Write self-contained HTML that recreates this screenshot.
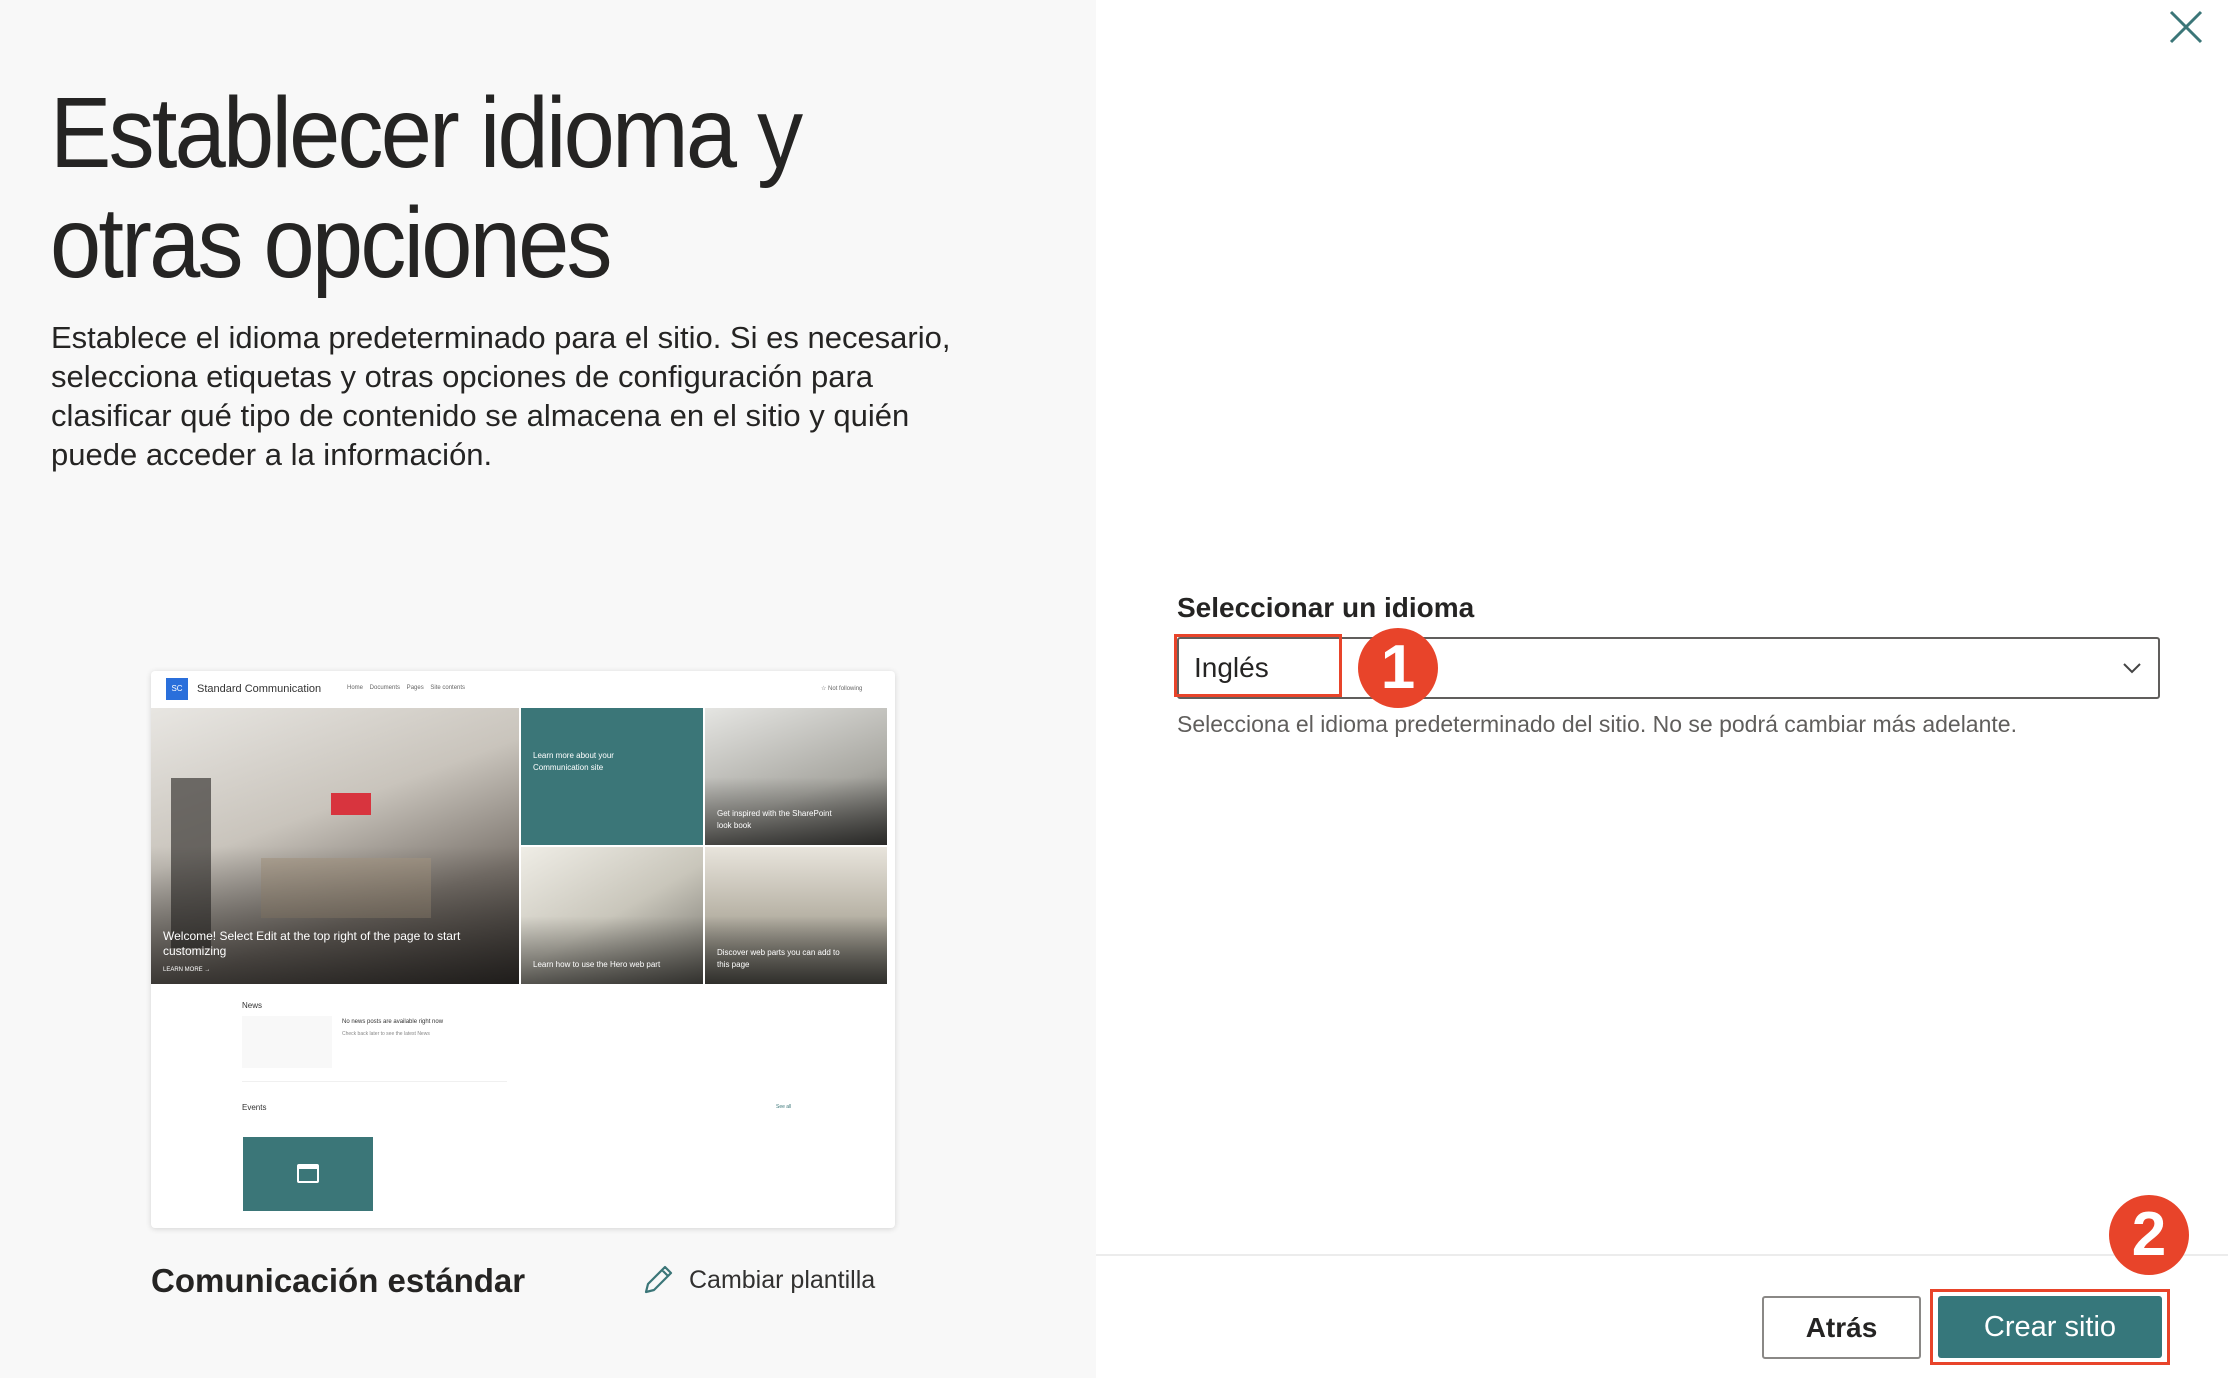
<!DOCTYPE html>
<html><head><meta charset="utf-8"><style>
*{box-sizing:border-box;margin:0;padding:0}
body{width:2228px;height:1378px;position:relative;overflow:hidden;background:#fff;font-family:"Liberation Sans",sans-serif;color:#323130}
.left{position:absolute;left:0;top:0;width:1096px;height:1378px;background:#f8f8f8}
h1{position:absolute;left:50px;top:78px;font-size:100px;font-weight:400;line-height:110px;letter-spacing:-3px;color:#252423;transform:scaleX(0.92);transform-origin:0 0;white-space:nowrap}
.desc{position:absolute;left:51px;top:318px;width:930px;font-size:31px;line-height:39px;color:#252423}
.card{position:absolute;left:151px;top:671px;width:744px;height:557px;background:#fff;box-shadow:0 1px 6px rgba(0,0,0,.15);border-radius:4px;overflow:hidden}
.hdr{height:37px;position:relative;font-size:11px;color:#444}
.abs{position:absolute}
.t{color:#fff;font-size:10px;line-height:12px;position:absolute}
.bl{position:absolute;left:0;bottom:0;width:100%;height:50%;background:linear-gradient(rgba(0,0,0,0),rgba(0,0,0,.55))}
.lab{position:absolute;left:1177px;top:592px;font-size:28px;font-weight:700;color:#252423}
.dd{position:absolute;left:1177px;top:637px;width:983px;height:62px;border:2px solid #605e5c;border-radius:3px}
.red1{position:absolute;left:1174px;top:634px;width:168px;height:63px;border:3px solid #e8442a}
.badge{position:absolute;width:80px;height:80px;border-radius:50%;background:#e8442a;color:#fff;font-weight:700;font-size:62px;text-align:center;line-height:80px}
.help{position:absolute;left:1177px;top:711px;font-size:23px;color:#605e5c}
.btn{position:absolute;font-size:28px;font-weight:700;text-align:center}
</style></head><body>
<div class="left">
<h1>Establecer idioma y<br>otras opciones</h1>
<div class="desc">Establece el idioma predeterminado para el sitio. Si es necesario, selecciona etiquetas y otras opciones de configuración para clasificar qué tipo de contenido se almacena en el sitio y quién puede acceder a la información.</div>
<div class="card">
 <div class="hdr">
  <div class="abs" style="left:15px;top:7px;width:22px;height:22px;background:#2a6fdb;color:#fff;font-size:8px;text-align:center;line-height:22px">SC</div>
  <div class="abs" style="left:46px;top:12px;font-size:11px;color:#333">Standard Communication</div>
  <div class="abs" style="left:196px;top:14px;font-size:6px;color:#666">Home &nbsp;&nbsp; Documents &nbsp;&nbsp; Pages &nbsp;&nbsp; Site contents</div>
  <div class="abs" style="left:670px;top:14px;font-size:6px;color:#666">☆ Not following</div>
 </div>
 <div class="abs" style="left:0;top:37px;width:368px;height:276px;background:linear-gradient(160deg,#e8e6e2 0%,#c9c4bc 40%,#7d766f 70%,#45403c 100%)">
  <div class="abs" style="left:180px;top:85px;width:40px;height:22px;background:#d8343e"></div>
  <div class="abs" style="left:20px;top:70px;width:40px;height:170px;background:#3d3a38;opacity:.7"></div>
  <div class="abs" style="left:110px;top:150px;width:170px;height:60px;background:#a89a86;opacity:.6"></div>
  <div class="bl"></div>
  <div class="t" style="left:12px;top:221px;font-size:12px;line-height:15px;width:340px">Welcome! Select Edit at the top right of the page to start customizing</div>
  <div class="t" style="left:12px;top:256px;font-size:6px">LEARN MORE →</div>
 </div>
 <div class="abs" style="left:370px;top:37px;width:182px;height:137px;background:#3b7678"><div class="t" style="left:12px;top:42px;font-size:8px">Learn more about your<br>Communication site</div></div>
 <div class="abs" style="left:554px;top:37px;width:182px;height:137px;background:linear-gradient(160deg,#e5e5e2,#a9a8a2 60%,#5c5b57)"><div class="bl"></div><div class="t" style="left:12px;top:100px;font-size:8px">Get inspired with the SharePoint<br>look book</div></div>
 <div class="abs" style="left:370px;top:176px;width:182px;height:137px;background:linear-gradient(150deg,#efede6,#c9c6bb 50%,#6f6d66)"><div class="bl"></div><div class="t" style="left:12px;top:112px;font-size:8px">Learn how to use the Hero web part</div></div>
 <div class="abs" style="left:554px;top:176px;width:182px;height:137px;background:linear-gradient(180deg,#e8e4dc,#b8b3a6 50%,#6a6861)"><div class="bl"></div><div class="t" style="left:12px;top:100px;font-size:8px">Discover web parts you can add to<br>this page</div></div>
 <div class="abs" style="left:91px;top:330px;font-size:8px;color:#333">News</div>
 <div class="abs" style="left:91px;top:345px;width:90px;height:52px;background:#f8f8f8"></div>
 <div class="abs" style="left:191px;top:348px;font-size:6px;color:#333">No news posts are available right now</div>
 <div class="abs" style="left:191px;top:360px;font-size:5px;color:#888">Check back later to see the latest News</div>
 <div class="abs" style="left:91px;top:410px;width:265px;height:1px;background:#f0f0f0"></div>
 <div class="abs" style="left:91px;top:432px;font-size:8px;color:#333">Events</div>
 <div class="abs" style="left:625px;top:433px;font-size:5px;color:#3b7678">See all</div>
 <div class="abs" style="left:92px;top:466px;width:130px;height:74px;background:#3b7678">
  <div class="abs" style="left:54px;top:27px;width:22px;height:19px;border:2px solid #fff;border-radius:2px;border-top-width:5px"></div>
 </div>
</div>
<div class="abs" style="left:151px;top:1262px;font-size:33px;font-weight:700;color:#252423">Comunicación estándar</div>
<svg class="abs" style="left:640px;top:1262px" width="36" height="36" viewBox="0 0 36 36"><path d="M6 30 L8 22 L25 5 L31 11 L14 28 Z M22 8 L28 14" fill="none" stroke="#3b7678" stroke-width="2.2" stroke-linejoin="round"/></svg>
<div class="abs" style="left:689px;top:1266px;font-size:25px;color:#323130">Cambiar plantilla</div>
</div>
<svg class="abs" style="left:2168px;top:9px" width="36" height="36" viewBox="0 0 36 36"><path d="M3 3 L33 33 M33 3 L3 33" stroke="#3b7678" stroke-width="3"/></svg>
<div class="lab">Seleccionar un idioma</div>
<div class="dd"><svg class="abs" style="right:16px;top:22px" width="20" height="14" viewBox="0 0 20 14"><path d="M2 3 L10 11 L18 3" fill="none" stroke="#444" stroke-width="2"/></svg></div>
<div class="red1"></div>
<div class="abs" style="left:1194px;top:652px;font-size:28px;color:#252423">Inglés</div>
<div class="badge" style="left:1358px;top:628px">1</div>
<div class="help">Selecciona el idioma predeterminado del sitio. No se podrá cambiar más adelante.</div>
<div class="abs" style="left:1096px;top:1254px;width:1132px;height:2px;background:#ececec"></div>
<div class="btn" style="left:1762px;top:1296px;width:159px;height:63px;border:2px solid #8a8886;border-radius:3px;line-height:59px;color:#252423">Atrás</div>
<div class="abs" style="left:1930px;top:1289px;width:240px;height:76px;border:3px solid #e8442a"></div>
<div class="btn" style="left:1938px;top:1296px;width:224px;height:62px;background:#36777b;border-radius:3px;color:#fff;font-weight:400;line-height:62px;font-size:29px">Crear sitio</div>
<div class="badge" style="left:2109px;top:1195px">2</div>
</body></html>
